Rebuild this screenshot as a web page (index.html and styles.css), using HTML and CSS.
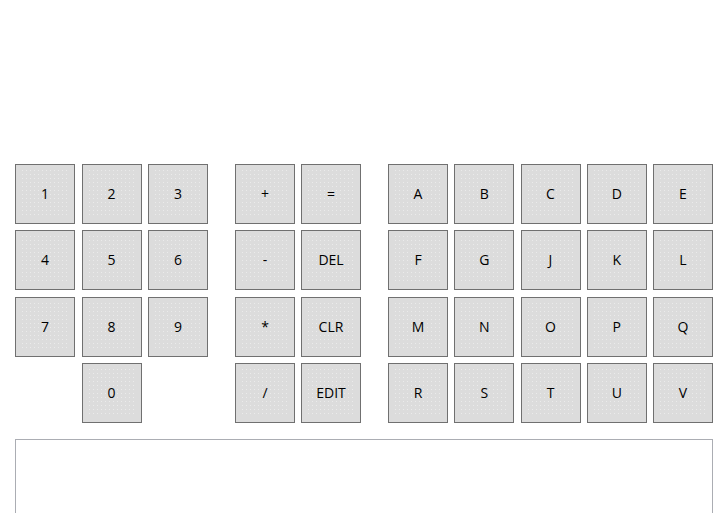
FILE: index.html
```html
<!DOCTYPE html>
<html>
<head>
<meta charset="utf-8">
<link rel="stylesheet" href="styles.css">
</head>
<body>
<div class="app">
  <div class="keyboard">
    <div class="group digits">
      <button class="key">1</button>
      <button class="key">2</button>
      <button class="key">3</button>
      <button class="key">4</button>
      <button class="key">5</button>
      <button class="key">6</button>
      <button class="key">7</button>
      <button class="key">8</button>
      <button class="key">9</button>
      <button class="key zero">0</button>
    </div>
    <div class="group ops">
      <button class="key">+</button>
      <button class="key">=</button>
      <button class="key">-</button>
      <button class="key">DEL</button>
      <button class="key">*</button>
      <button class="key">CLR</button>
      <button class="key">/</button>
      <button class="key">EDIT</button>
    </div>
    <div class="group letters">
      <button class="key">A</button>
      <button class="key">B</button>
      <button class="key">C</button>
      <button class="key">D</button>
      <button class="key">E</button>
      <button class="key">F</button>
      <button class="key">G</button>
      <button class="key">J</button>
      <button class="key">K</button>
      <button class="key">L</button>
      <button class="key">M</button>
      <button class="key">N</button>
      <button class="key">O</button>
      <button class="key">P</button>
      <button class="key">Q</button>
      <button class="key">R</button>
      <button class="key">S</button>
      <button class="key">T</button>
      <button class="key">U</button>
      <button class="key">V</button>
    </div>
  </div>
  <div class="output"></div>
</div>
</body>
</html>
```

FILE: styles.css
```css
html, body {
  margin: 0;
  padding: 0;
  background: #ffffff;
  overflow: hidden;
}

.app {
  width: 716px;
  height: 513px;
  box-sizing: border-box;
  padding: 164px 0 0 15px;
  overflow: hidden;
  font-family: "Open Sans", "Noto Sans", sans-serif;
}

.keyboard {
  display: flex;
  gap: 27px;
  align-items: flex-start;
}

.group {
  display: grid;
  grid-auto-rows: 60px;
  row-gap: 6.33px;
}

.digits {
  grid-template-columns: repeat(3, 60px);
  column-gap: 6.5px;
}

.ops {
  grid-template-columns: repeat(2, 60px);
  column-gap: 6px;
}

.letters {
  grid-template-columns: repeat(5, 60px);
  column-gap: 6.25px;
}

.zero {
  grid-column-start: 2;
}

.key {
  width: 60px;
  height: 60px;
  margin: 0;
  padding: 5px;
  box-sizing: border-box;
  border: 1px solid #707070;
  border-radius: 0;
  background:
    conic-gradient(from 270deg at 1px 1px, #ebebeb 25%, transparent 0) 1px 4px / 4px 4px content-box,
    #dcdcdc;
  background-clip: content-box, border-box;
  font-family: "Open Sans", "Noto Sans", sans-serif;
  font-size: 14px;
  color: #000000;
  line-height: 1;
  display: flex;
  align-items: center;
  justify-content: center;
}

.output {
  margin-top: 16px;
  width: 698px;
  height: 90px;
  box-sizing: border-box;
  border: 1px solid #abadb3;
  background: #ffffff;
}
```
